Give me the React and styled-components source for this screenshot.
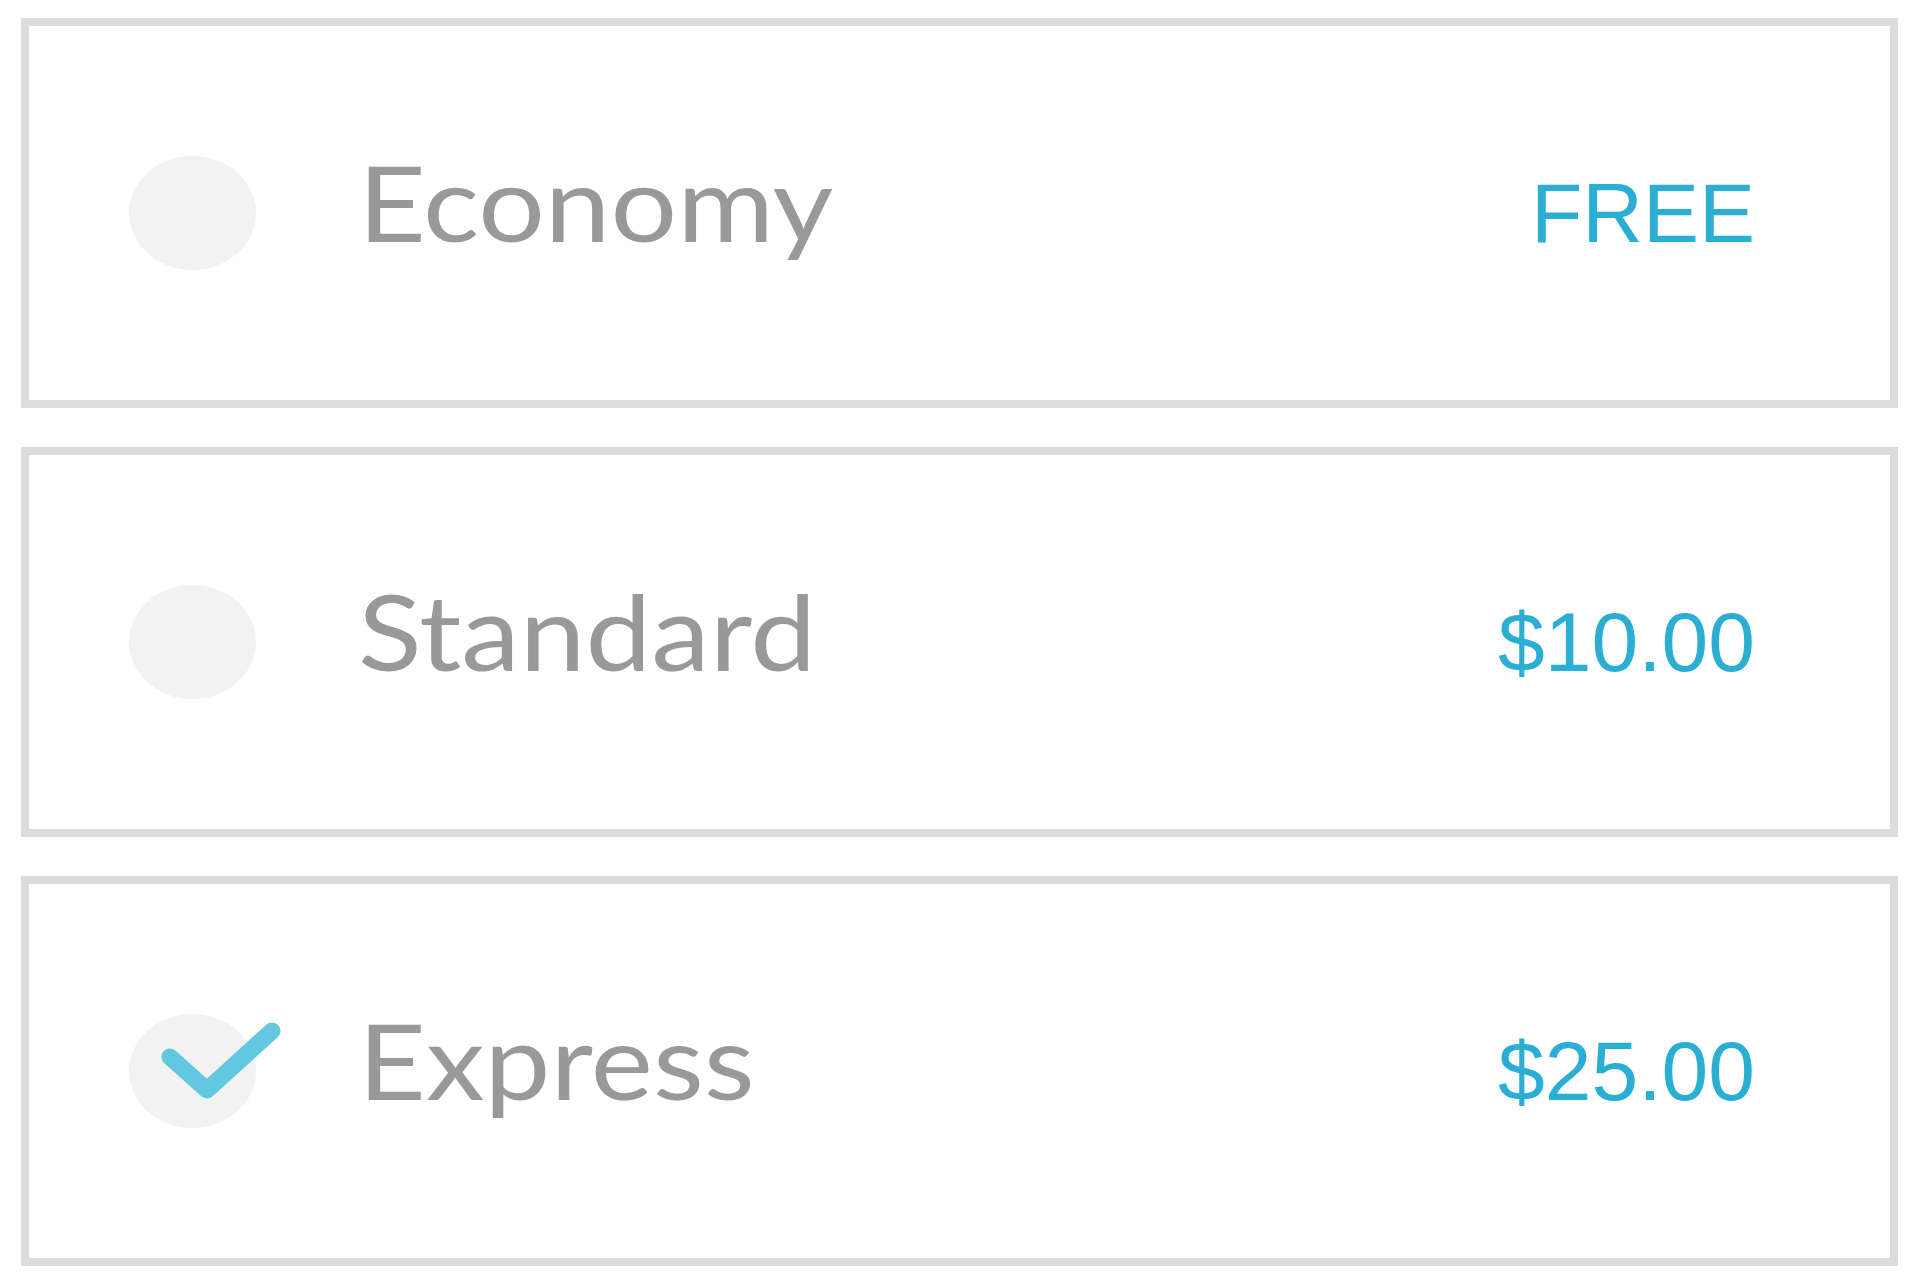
import React, { useState } from "react";
import styled, { createGlobalStyle } from "styled-components";

const GlobalStyle = createGlobalStyle`
  html, body {
    margin: 0;
    padding: 0;
    background: #ffffff;
  }
`;

const List = styled.div`
  display: flex;
  flex-direction: column;
  gap: 39px;
  padding: 18px 22px 0 21px;
`;

const Option = styled.label`
  display: flex;
  align-items: center;
  height: 390px;
  box-sizing: border-box;
  border: 8px solid #dcdcdc;
  padding: 0 135px 0 100px;
  cursor: pointer;
`;

const Dot = styled.span`
  position: relative;
  flex: none;
  width: 127px;
  height: 114px;
  border-radius: 50%;
  background: #f2f2f2;
`;

const Check = styled.svg`
  position: absolute;
  left: 28px;
  top: -52px;
  width: 130px;
  height: 110px;
  overflow: visible;
`;

// the label face is drawn a bit wider than plain Lato
const Name = styled.span`
  margin-left: 102px;
  margin-bottom: 24px;
  flex: 1;
  font-family: Lato, "Liberation Sans", sans-serif;
  font-size: 105px;
  color: #999999;
  transform: scaleX(1.12);
  transform-origin: left center;
`;

const Price = styled.span`
  font-family: "Liberation Sans", Arial, sans-serif;
  font-size: 84px;
  color: #2baed3;
`;

const options = [
  { id: "economy", name: "Economy", price: "FREE" },
  { id: "standard", name: "Standard", price: "$10.00" },
  { id: "express", name: "Express", price: "$25.00" },
];

const App = () => {
  const [selected, setSelected] = useState("express");

  return (
    <>
      <GlobalStyle />
      <List>
        {options.map((opt) => (
          <Option key={opt.id} onClick={() => setSelected(opt.id)}>
            <Dot>
              {selected === opt.id && (
                <Check viewBox="0 0 130 110">
                  <polyline
                    points="13,95 50,128 115,69"
                    fill="none"
                    stroke="#62c8df"
                    strokeWidth="17"
                    strokeLinecap="round"
                    strokeLinejoin="round"
                  />
                </Check>
              )}
            </Dot>
            <Name>{opt.name}</Name>
            <Price>{opt.price}</Price>
          </Option>
        ))}
      </List>
    </>
  );
};

export default App;
